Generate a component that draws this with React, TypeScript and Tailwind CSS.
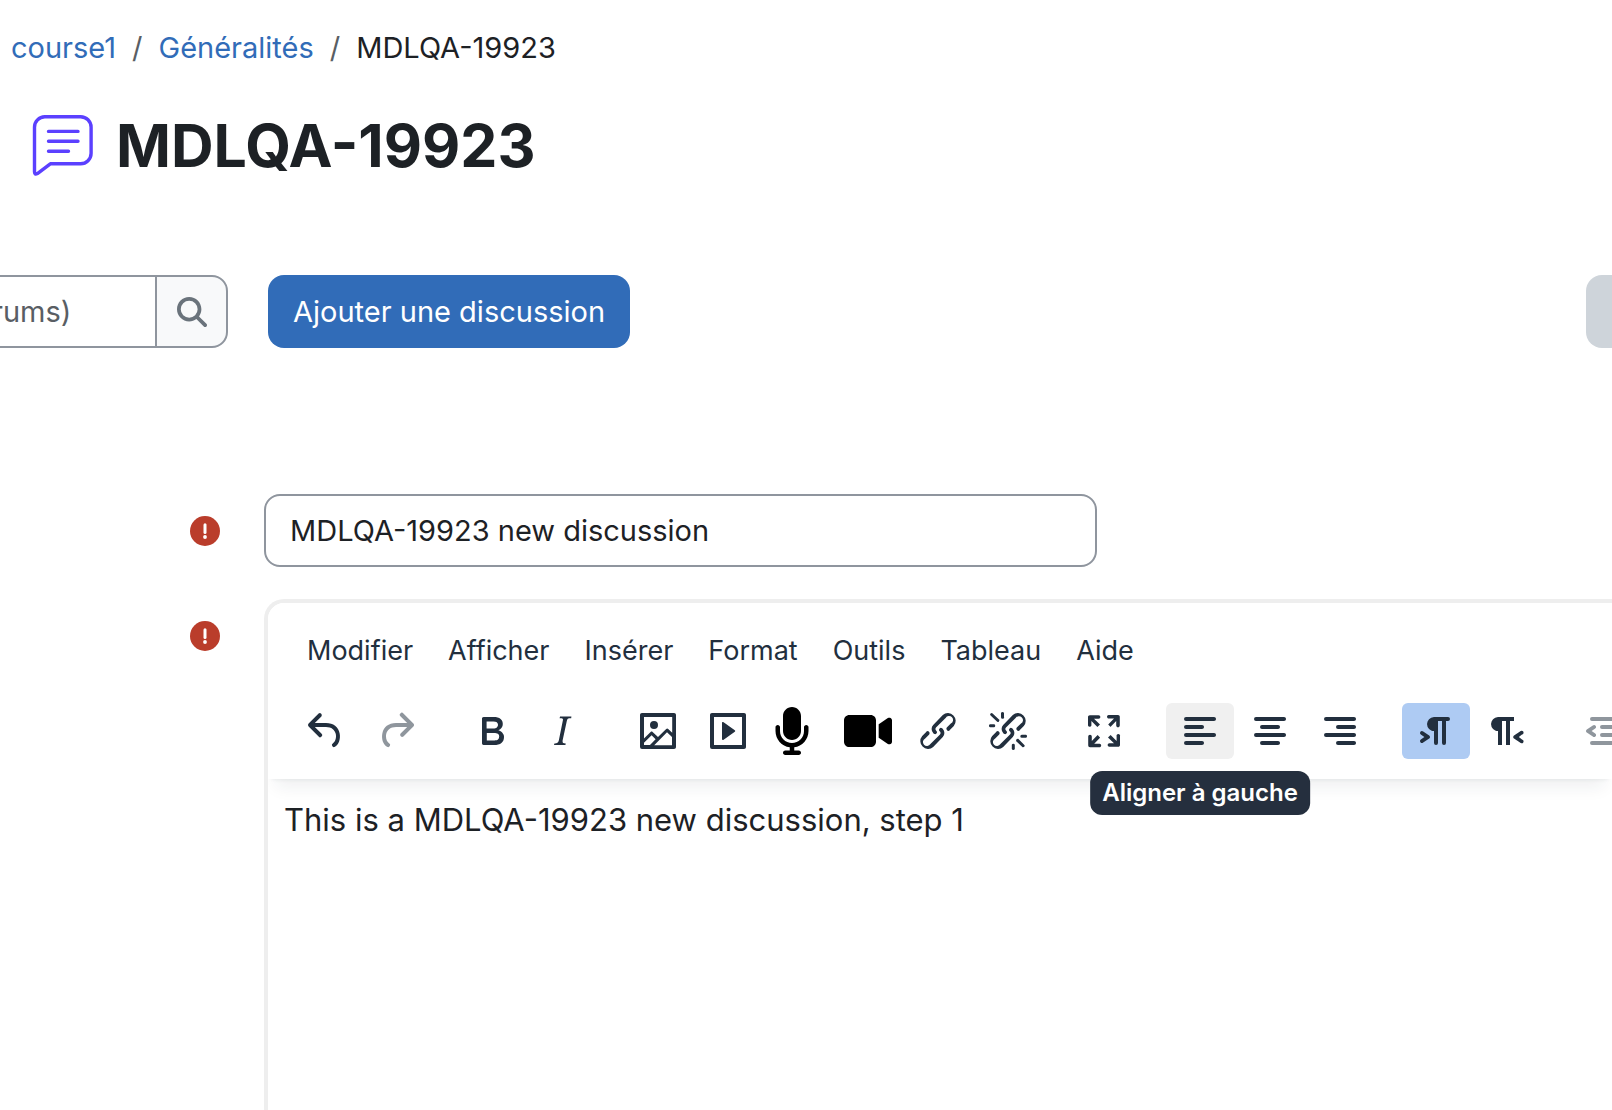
import { ReactNode } from "react";
import { FaMicrophone, FaVideo, FaMagnifyingGlass } from "react-icons/fa6";

const paths = {
  undo: "M6.4 8H12c3.7 0 6.2 2 6.8 5.1.6 2.7-.4 5.6-2.3 6.8a1 1 0 0 1-1-1.8c1.1-.6 1.8-2.7 1.4-4.6-.5-2.1-2.1-3.5-4.9-3.5H6.4l3.3 3.3a1 1 0 1 1-1.4 1.4l-5-5a1 1 0 0 1 0-1.4l5-5a1 1 0 0 1 1.4 1.4L6.4 8Z",
  redo: "M17.6 10H12c-2.8 0-4.4 1.4-4.9 3.5-.4 2 .3 4 1.4 4.6a1 1 0 1 1-1 1.8c-2-1.2-2.9-4.1-2.3-6.8.6-3 3-5.1 6.8-5.1h5.6l-3.3-3.3a1 1 0 1 1 1.4-1.4l5 5a1 1 0 0 1 0 1.4l-5 5a1 1 0 0 1-1.4-1.4l3.3-3.3Z",
  bold: "M7.8 19c-.3 0-.5 0-.6-.2l-.2-.5V5.7c0-.2 0-.4.2-.5l.6-.2h5c1.5 0 2.7.3 3.5 1 .7.6 1.1 1.4 1.1 2.5a3 3 0 0 1-.6 1.9c-.4.6-1 1-1.6 1.2.4.1.9.3 1.3.6s.8.7 1 1.2c.4.4.5 1 .5 1.6 0 1.3-.4 2.3-1.3 3-.8.7-2.1 1-3.8 1H7.8Zm5-8.3c.6 0 1.2-.1 1.6-.5.4-.3.6-.7.6-1.3 0-1.1-.8-1.7-2.3-1.7H9.3v3.5h3.4Zm.5 6c.7 0 1.3-.1 1.7-.4.4-.4.6-.9.6-1.5s-.2-1-.7-1.4c-.4-.3-1-.4-2-.4H9.4v3.8h4Z",
  italic: "m16.7 4.7-.1.9h-.3c-.6 0-1 0-1.4.3-.3.3-.4.6-.5 1.1l-2.1 9.8v.6c0 .5.4.8 1.4.8h.2l-.2.8H8l.2-.8h.2c1.1 0 1.8-.5 2-1.5l2-9.8.1-.5c0-.6-.4-.8-1.4-.8h-.3l.2-.9h5.8Z",
  image: "m5 15.7 3.3-3.2c.3-.3.7-.3 1 0L12 15l4.1-4c.3-.4.8-.4 1 0l2 1.9V5H5v10.7ZM5 18V19h3l2.8-2.9-2-2L5 17.9Zm14-3-2.5-2.4-6.4 6.5H19v-4ZM4 3h16c.6 0 1 .4 1 1v16c0 .6-.4 1-1 1H4a1 1 0 0 1-1-1V4c0-.6.4-1 1-1Zm6 8a2 2 0 1 0 0-4 2 2 0 0 0 0 4Z",
  embed: "M4 3h16c.6 0 1 .4 1 1v16c0 .6-.4 1-1 1H4a1 1 0 0 1-1-1V4c0-.6.4-1 1-1Zm1 2v14h14V5H5Zm4.8 2.6 5.6 4a.5.5 0 0 1 0 .8l-5.6 4A.5.5 0 0 1 9 16V8a.5.5 0 0 1 .8-.4Z",
  link: "M6.2 12.3a1 1 0 0 1 1.4 1.4l-2 2a2 2 0 1 0 2.6 2.8l4.8-4.8a1 1 0 0 0 0-1.4 1 1 0 1 1 1.4-1.3 2.9 2.9 0 0 1 0 4L9.6 20a3.9 3.9 0 0 1-5.5-5.5l2-2Zm11.6-.6a1 1 0 0 1-1.4-1.4l2-2a2 2 0 1 0-2.6-2.8L11 10.3a1 1 0 0 0 0 1.4A1 1 0 1 1 9.6 13a2.9 2.9 0 0 1 0-4L14.4 4a3.9 3.9 0 0 1 5.5 5.5l-2 2Z",
  unlink: "M6.2 12.3a1 1 0 0 1 1.4 1.4l-2 2a2 2 0 1 0 2.6 2.8l4.8-4.8a1 1 0 0 0 0-1.4 1 1 0 1 1 1.4-1.3 2.9 2.9 0 0 1 0 4L9.6 20a3.9 3.9 0 0 1-5.5-5.5l2-2Zm11.6-.6a1 1 0 0 1-1.4-1.4l2.1-2a2 2 0 1 0-2.7-2.8L11 10.3a1 1 0 0 0 0 1.4A1 1 0 1 1 9.6 13a2.9 2.9 0 0 1 0-4L14.4 4a3.9 3.9 0 0 1 5.5 5.5l-2 2ZM7.6 6.3a.8.8 0 0 1-1 1.1L3.3 4.2a.7.7 0 1 1 1-1l3.2 3.1ZM5.1 8.6a.8.8 0 0 1 0 1.5H3a.8.8 0 0 1 0-1.5H5Zm5-3.5a.8.8 0 0 1-1.6 0V3a.8.8 0 0 1 1.5 0V5Zm6 11.8a.8.8 0 0 1 1-1l3.2 3.2a.8.8 0 0 1-1 1L16 17Zm-2.2 2a.8.8 0 0 1 1.5 0V21a.8.8 0 0 1-1.5 0V19Zm5-3.5a.7.7 0 1 1 0-1.5H21a.8.8 0 0 1 0 1.5H19Z",
  fullscreen: "m15.3 10-1.2-1.3 2.9-3h-2.3a.9.9 0 1 1 0-1.7H19c.5 0 .9.4.9.9v4.4a.9.9 0 1 1-1.8 0V7l-2.9 3Zm0 4 3 3v-2.3a.9.9 0 1 1 1.7 0V19c0 .5-.4.9-.9.9h-4.4a.9.9 0 1 1 0-1.8H17l-3-2.9 1.3-1.2ZM10 15.4l-2.9 3h2.3a.9.9 0 1 1 0 1.7H5a.9.9 0 0 1-.9-.9v-4.4a.9.9 0 1 1 1.8 0V17l2.9-3 1.2 1.3ZM8.7 10 5.7 7v2.3a.9.9 0 0 1-1.7 0V5c0-.5.4-.9.9-.9h4.4a.9.9 0 0 1 0 1.8H7l3 2.9-1.3 1.2Z",
  left: "M5 5h14c.6 0 1 .4 1 1s-.4 1-1 1H5a1 1 0 1 1 0-2Zm0 4h8c.6 0 1 .4 1 1s-.4 1-1 1H5a1 1 0 1 1 0-2Zm0 8h8c.6 0 1 .4 1 1s-.4 1-1 1H5a1 1 0 0 1 0-2Zm0-4h14c.6 0 1 .4 1 1s-.4 1-1 1H5a1 1 0 0 1 0-2Z",
  center: "M5 5h14c.6 0 1 .4 1 1s-.4 1-1 1H5a1 1 0 1 1 0-2Zm3 4h8c.6 0 1 .4 1 1s-.4 1-1 1H8a1 1 0 1 1 0-2Zm0 8h8c.6 0 1 .4 1 1s-.4 1-1 1H8a1 1 0 0 1 0-2Zm-3-4h14c.6 0 1 .4 1 1s-.4 1-1 1H5a1 1 0 0 1 0-2Z",
  right: "M5 5h14c.6 0 1 .4 1 1s-.4 1-1 1H5a1 1 0 1 1 0-2Zm6 4h8c.6 0 1 .4 1 1s-.4 1-1 1h-8a1 1 0 0 1 0-2Zm0 8h8c.6 0 1 .4 1 1s-.4 1-1 1h-8a1 1 0 0 1 0-2Zm-6-4h14c.6 0 1 .4 1 1s-.4 1-1 1H5a1 1 0 0 1 0-2Z",
  ltr: "M11 5h7a1 1 0 0 1 0 2h-1v11a1 1 0 0 1-2 0V7h-2v11a1 1 0 0 1-2 0v-6c-.5 0-1 0-1.4-.3A3.4 3.4 0 0 1 7.8 10a3.3 3.3 0 0 1 0-2.8 3.4 3.4 0 0 1 1.8-1.8L11 5ZM4.4 16.2 6.2 15l-1.8-1.2a1 1 0 0 1 1.2-1.6l3 2a1 1 0 0 1 0 1.6l-3 2a1 1 0 1 1-1.2-1.6Z",
  rtl: "M8 5h8v2h-2v12h-2V7h-2v12H8v-7c-.5 0-1 0-1.4-.3A3.4 3.4 0 0 1 4.8 10a3.3 3.3 0 0 1 0-2.8 3.4 3.4 0 0 1 1.8-1.8L8 5Zm12 11.2a1 1 0 1 1-1 1.6l-3-2a1 1 0 0 1 0-1.6l3-2a1 1 0 1 1 1 1.6L18.4 15l1.6 1.2Z",
  outdent: "M7 5h12c.6 0 1 .4 1 1s-.4 1-1 1H7a1 1 0 1 1 0-2Zm5 4h7c.6 0 1 .4 1 1s-.4 1-1 1h-7a1 1 0 0 1 0-2Zm0 4h7c.6 0 1 .4 1 1s-.4 1-1 1h-7a1 1 0 0 1 0-2Zm-5 4h12a1 1 0 0 1 0 2H7a1 1 0 0 1 0-2Zm1.6-3.8a1 1 0 0 1-1.2 1.6l-3-2a1 1 0 0 1 0-1.6l3-2a1 1 0 0 1 1.2 1.6L6.8 12l1.8 1.2Z",
};

function Icon({ name }: { name: keyof typeof paths }) {
  return (
    <svg viewBox="0 0 24 24" className="size-12 shrink-0 fill-current" fillRule="evenodd" aria-hidden="true">
      <path d={paths[name]} />
    </svg>
  );
}

function Group({ children }: { children: ReactNode }) {
  return <div className="flex shrink-0 gap-0.5">{children}</div>;
}

type ToolProps = { label: string; children: ReactNode; disabled?: boolean; tone?: string };

function Tool({ label, children, disabled, tone = "" }: ToolProps) {
  return (
    <button
      type="button"
      aria-label={label}
      disabled={disabled}
      className={`flex h-14 w-[68px] shrink-0 items-center rounded-md px-2.5 disabled:opacity-50 ${tone}`}
    >
      {children}
    </button>
  );
}

function Required() {
  return (
    <svg viewBox="0 0 30 30" className="size-[30px]" role="img" aria-label="Requis">
      <circle cx="15" cy="15" r="15" fill="#ba3d2b" />
      <path d="M15 8.8v7.6" stroke="#fff" strokeWidth="3" strokeLinecap="round" />
      <circle cx="15" cy="21" r="1.9" fill="#fff" />
    </svg>
  );
}

const menus = ["Modifier", "Afficher", "Insérer", "Format", "Outils", "Tableau", "Aide"];

export default function App() {
  return (
    <div className="flex min-h-screen flex-col overflow-x-clip bg-white font-['Inter',sans-serif] text-[29px] text-[#1d2125]">
      <nav aria-label="Fil d’Ariane" className="px-[11px] pt-6">
        <ol className="flex items-center gap-4 leading-[48px]">
          <li><a href="#course" className="text-[#316cb8]">course1</a></li>
          <li aria-hidden="true" className="text-[#595e64]">/</li>
          <li><a href="#section" className="text-[#316cb8]">Généralités</a></li>
          <li aria-hidden="true" className="text-[#595e64]">/</li>
          <li aria-current="page">MDLQA-19923</li>
        </ol>
      </nav>

      <header className="mt-10 flex items-center gap-[22px] px-8">
        <svg viewBox="0 0 62 62" className="size-[62px]" fill="none" stroke="#5b40ff" strokeWidth="3.4" strokeLinecap="round" strokeLinejoin="round" aria-hidden="true">
          <path d="M12.8 1.7H48.6A10.5 10.5 0 0 1 59.1 12.2V38.3A10.5 10.5 0 0 1 48.6 48.8H18.3L5.4 58.6Q2.6 60.2 2.5 57V12.2A10.5 10.5 0 0 1 12.8 1.7Z" />
          <path d="M16.5 16.4h29.5M16.5 26.2h29.5M16.5 36.2h20" />
        </svg>
        <h1 className="text-[59px] leading-[68px] font-bold">MDLQA-19923</h1>
      </header>

      <div className="mt-[95px] flex items-stretch">
        <form role="search" className="flex h-[73px]">
          <input
            type="search"
            aria-label="Rechercher dans les forums"
            placeholder="rums)"
            className="-ml-2 w-[163px] border-y-2 border-[#8f959e] placeholder:text-[#595e64] placeholder:opacity-100"
          />
          <button type="button" aria-label="Rechercher" className="flex w-[73px] items-center justify-center rounded-r-2xl border-2 border-[#8f959e] bg-[#f8f9fa] text-[#6a737b]">
            <FaMagnifyingGlass className="size-[30px]" />
          </button>
        </form>
        <button type="button" className="ml-10 rounded-2xl bg-[#316cb8] px-[25px] text-white">Ajouter une discussion</button>
        <button type="button" aria-label="Préférences" className="ml-auto w-[26px] rounded-l-2xl bg-[#ced4da]" />
      </div>

      <form className="mt-[146px] grid flex-1 grid-cols-[220px_minmax(0,1fr)] grid-rows-[auto_1fr] gap-x-11 gap-y-8">
        <div className="flex items-center justify-end"><Required /></div>
        <input
          aria-label="Sujet"
          defaultValue="MDLQA-19923 new discussion"
          className="h-[73px] w-[833px] max-w-full rounded-2xl border-2 border-[#8f959e] px-6"
        />

        <div className="flex justify-end pt-[22px]"><Required /></div>
        <div className="flex flex-col overflow-clip rounded-tl-[20px] border-t-4 border-l-4 border-[#eee]">
          <div className="relative z-10 bg-white pt-5 pb-5 pl-6 text-[#222f3e] shadow-[0_4px_4px_-4px_rgba(34,47,62,0.1),0_16px_16px_-8px_rgba(34,47,62,0.07)]">
            <div role="menubar" className="flex gap-[5px] text-[27px] leading-[56px]">
              {menus.map((menu) => (
                <button key={menu} type="button" role="menuitem" className="px-[15px]">{menu}</button>
              ))}
            </div>
            <div role="toolbar" aria-label="Mise en forme" className="mt-6 flex gap-7">
              <Group>
                <Tool label="Annuler"><Icon name="undo" /></Tool>
                <Tool label="Rétablir" disabled><Icon name="redo" /></Tool>
              </Group>
              <Group>
                <Tool label="Gras"><Icon name="bold" /></Tool>
                <Tool label="Italique"><Icon name="italic" /></Tool>
              </Group>
              <Group>
                <Tool label="Image"><Icon name="image" /></Tool>
                <Tool label="Multimédia"><Icon name="embed" /></Tool>
                <Tool label="Enregistrer l’audio" tone="text-black"><FaMicrophone className="h-12 w-9" /></Tool>
                <Tool label="Enregistrer la vidéo" tone="text-black"><FaVideo className="size-12" /></Tool>
                <Tool label="Lien"><Icon name="link" /></Tool>
                <Tool label="Supprimer le lien"><Icon name="unlink" /></Tool>
              </Group>
              <Group>
                <Tool label="Plein écran"><Icon name="fullscreen" /></Tool>
              </Group>
              <Group>
                <div className="relative">
                  <Tool label="Aligner à gauche" tone="bg-[#f0f0f0]"><Icon name="left" /></Tool>
                  <div role="tooltip" className="absolute top-full left-1/2 mt-3 -translate-x-1/2 rounded-xl bg-[#252f3e] px-3 text-2xl leading-[44px] font-semibold whitespace-nowrap text-white">
                    Aligner à gauche
                  </div>
                </div>
                <Tool label="Centrer"><Icon name="center" /></Tool>
                <Tool label="Aligner à droite"><Icon name="right" /></Tool>
              </Group>
              <Group>
                <Tool label="De gauche à droite" tone="bg-[#aecbf3]"><Icon name="ltr" /></Tool>
                <Tool label="De droite à gauche"><Icon name="rtl" /></Tool>
              </Group>
              <Group>
                <Tool label="Diminuer le retrait" disabled><Icon name="outdent" /></Tool>
              </Group>
            </div>
          </div>
          <textarea
            aria-label="Message"
            defaultValue="This is a MDLQA-19923 new discussion, step 1"
            className="flex-1 resize-none px-4 pt-[17px] text-[31px] leading-[48px] outline-none"
          />
        </div>
      </form>
    </div>
  );
}
